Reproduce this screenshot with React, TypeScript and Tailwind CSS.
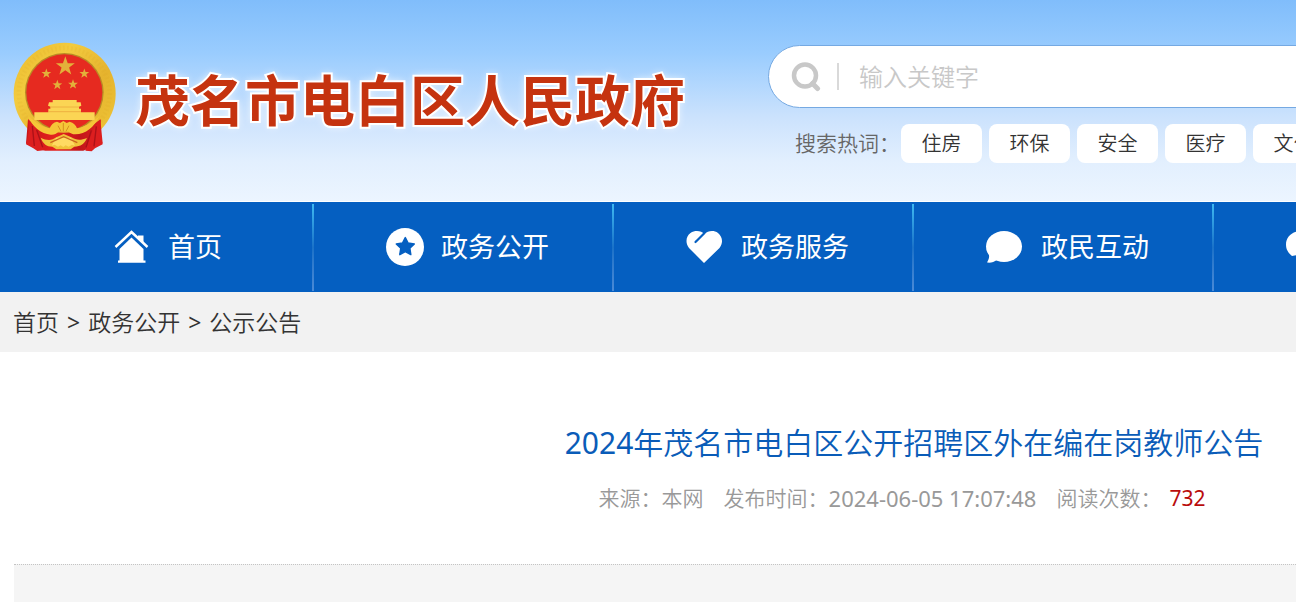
import React from "react";

const hotWords = ["住房", "环保", "安全", "医疗", "文化"];

const STAR = "M0,-10 2.4,-3.2 9.5,-3.1 3.8,1.2 5.9,8.1 0,4 -5.9,8.1 -3.8,1.2 -9.5,-3.1 -2.4,-3.2Z";

const Emblem = () => (
  <svg viewBox="39 36 312 330" className="h-[110px] w-[104px] shrink-0" aria-hidden="true">
    <defs>
      <linearGradient id="gold" x1="0" y1="0" x2="1" y2="1">
        <stop offset="0" stopColor="#e9b92c" />
        <stop offset="0.3" stopColor="#f3cb3f" />
        <stop offset="0.6" stopColor="#e5b32e" />
        <stop offset="1" stopColor="#f0c838" />
      </linearGradient>
      <linearGradient id="drape" x1="0" y1="0" x2="1" y2="0">
        <stop offset="0" stopColor="#c91418" />
        <stop offset="0.4" stopColor="#e5231f" />
        <stop offset="0.7" stopColor="#c3161a" />
        <stop offset="1" stopColor="#dd201f" />
      </linearGradient>
    </defs>
    <circle cx="194" cy="191" r="153" fill="url(#gold)" />
    <circle cx="193" cy="190" r="136" fill="none" stroke="#d99d22" strokeWidth="14" strokeDasharray="5 7" opacity="0.12" />
    <circle cx="193" cy="187" r="118" fill="#b98a24" />
    <circle cx="193" cy="187" r="114" fill="#e62a20" />
    <g fill="#e3b03a">
      <path d={STAR} transform="translate(196 109) scale(3)" />
      <path d={STAR} transform="translate(139 131) scale(1.55)" />
      <path d={STAR} transform="translate(253 131) scale(1.55)" />
      <path d={STAR} transform="translate(172 165) scale(1.55)" />
      <path d={STAR} transform="translate(219 163) scale(1.55)" />
    </g>
    <path d="M158 210h72v7h12l2 10-7 3v6h6v11h41v23H103v-23h42v-11h6v-6l-7-3 3-10h11z" fill="#fbd554" />
    <path d="M151 231h86M145 245h98" stroke="#e9a036" strokeWidth="2" />
    <path d="M84 268c34 30 57 40 107 40s76-11 110-40l7 72c-20 8-40 14-58 22h-115c-22-6-40-10-57-22z" fill="url(#drape)" />
    <path d="M84 268l22 23 26 70-20 2-12-8-22-12c7-22 10-48 6-75zM303 268l-23 28-24 66 19 2 10-9 23-12c-7-25-9-50-5-75z" fill="#dc1e1f" />
    <path d="M97 288l6 60M289 289l-7 60M110 300l18 52M274 301l-16 51" stroke="#ab1118" strokeWidth="4" />
    <path
      d="M84 258c24 20 42 32 65 37 4-10 11-18 22-20l9 4 10-6 10 6 9-4c12 3 18 10 22 20 24-4 45-17 67-37-15 33-41 55-72 55-9 0-16-4-20-8h-31c-6 7-13 10-23 9-28-2-57-25-68-56z"
      fill="#f5c638"
    />
    <path d="M174 287l9 17M190 279v25M207 287l-9 17" stroke="#d88f20" strokeWidth="3" />
    <path
      d="M122 323c18 9 34 9 47-1l22-10 23 10c14 9 28 10 47 2-7 17-19 26-38 26l-11 8h-43l-12-8c-17 0-29-10-35-27z"
      fill="#f1c33b"
    />
    <path d="M168 323l45 0 12 24-9-3-10 6-9-4-7 5-8-5-8 4-10-6-9 3z" fill="#ffda62" />
    <path d="M151 338l40-18 41 18" fill="none" stroke="#cb651f" strokeWidth="4" />
  </svg>
);

const HomeIcon = () => (
  <svg viewBox="1 0 38 38" className="h-[38px] w-[38px]" aria-hidden="true">
    <path d="M19.500 9.500 31.500 21v12.800h-24V21z" fill="#fff" />
    <path d="M3.500 19 19.500 4l16 15" fill="none" stroke="#fff" strokeWidth="2.4" />
    <path d="M26 7.500h5.500v7.200L26 9.800zM6 32.500h27.500v2.300H6z" fill="#fff" />
  </svg>
);

const StarIcon = () => (
  <svg viewBox="0 0 38 38" className="h-[38px] w-[38px]" aria-hidden="true">
    <circle cx="19" cy="19" r="19" fill="#fff" />
    <path
      d="M0,-9 2.800,-3.600 9,-2.700 4.500,1.600 5.500,8 0,5 -5.500,8 -4.500,1.600 -9,-2.700 -2.800,-3.600Z"
      transform="translate(19.3 18.6)"
      fill="#055fc1"
      stroke="#055fc1"
      strokeWidth="1.5"
      strokeLinejoin="round"
    />
  </svg>
);

const HeartIcon = () => (
  <svg viewBox="0 0 38 38" className="h-[38px] w-[38px]" aria-hidden="true">
    <path
      d="M18 35 3 20C-1 15 0 8 4.500 5 9 2 15 2.500 18.500 6 22 2.500 28 2 32 5c4.500 3.500 5.500 10 1.500 15z"
      fill="#fff"
    />
    <path d="M18.300 5.200 9.500 14" stroke="#055fc1" strokeWidth="2.200" strokeLinecap="round" />
  </svg>
);

const ChatIcon = () => (
  <svg viewBox="1 0 38 38" className="h-[38px] w-[38px]" aria-hidden="true">
    <ellipse cx="19" cy="18.500" rx="18" ry="15.500" fill="#fff" />
    <path d="M3.500 25c1.500 4 0 7-1.500 9.500 4 .5 7-.5 10-2.500z" fill="#fff" />
  </svg>
);

const WechatIcon = () => (
  <svg viewBox="0 0 38 38" className="h-[38px] w-[38px]" aria-hidden="true">
    <path d="M15 3C6 3 0 9 0 16.500c0 5 2 8 6 11.500l5-1c-1-9 6-15 17-15C26 6 21 3 15 3z" fill="#fff" />
    <path d="M26 14c-7 0-12 4-12 9.500S19 33 26 33l7 3-1.500-5c4-2 6.500-4 6.500-8 0-5-5-9-12-9z" fill="#fff" />
  </svg>
);

const navItems = [
  { title: "首页", icon: <HomeIcon /> },
  { title: "政务公开", icon: <StarIcon /> },
  { title: "政务服务", icon: <HeartIcon /> },
  { title: "政民互动", icon: <ChatIcon /> },
  { title: "走进电白", icon: <WechatIcon /> },
];

const Header = () => (
  <header className="border-b border-white bg-[linear-gradient(to_bottom,#80bdfb_0%,#99ccfe_26%,#cbe2fd_58%,#e2effe_80%,#ecf5ff_100%)]">
    <div className="flex h-[201px] w-[1800px] items-start pl-[13px]">
      <a href="#" className="flex w-[755px] shrink-0 items-center gap-[18px] pt-[42px]">
        <Emblem />
        <h1 className="whitespace-nowrap font-['Noto_Sans_CJK_SC',sans-serif] text-[55px] leading-[80px] font-bold text-[#c5330f] [-webkit-text-stroke:4px_#fff] [paint-order:stroke_fill] [text-shadow:0_0_8px_#fff]">
          茂名市电白区人民政府
        </h1>
      </a>
      <div className="grow pt-[45px]">
        <form className="flex h-[63px] items-center rounded-full border border-[#75a9e2] bg-white pl-[22px]">
          <button type="button" aria-label="搜索" className="text-[#c8c8c8]">
            <svg viewBox="0 0 30 30" className="h-[30px] w-[30px]" fill="none" stroke="currentColor" aria-hidden="true">
              <circle cx="14" cy="13.500" r="11" strokeWidth="4.500" />
              <path d="M21.500 21.500 26.500 26.500" strokeWidth="5" strokeLinecap="round" />
            </svg>
          </button>
          <span className="ml-4 h-[27px] w-[2px] bg-[#d9d9d9]" />
          <input
            type="text"
            aria-label="输入关键字"
            placeholder="输入关键字"
            className="ml-5 h-10 grow text-2xl font-[350] text-[#333] outline-none placeholder:text-[#c8c8c8]"
          />
        </form>
        <div className="mt-4 flex h-[39px] items-center pl-[27px]">
          <span className="w-[106px] text-[21px] font-[350] text-[#666]">搜索热词：</span>
          <div className="flex gap-[7px]">
            {hotWords.map((word) => (
              <a
                key={word}
                href="#"
                className="flex h-[39px] w-[81px] items-center justify-center rounded-lg bg-white text-xl font-[350] text-[#333]"
              >
                {word}
              </a>
            ))}
          </div>
        </div>
      </div>
    </div>
  </header>
);

const NavBar = () => (
  <nav className="bg-[#055fc1]">
    <div className="ml-[14px] flex w-[1800px]">
      {navItems.map(({ title, icon }) => (
        <a key={title} href="#" className="flex h-[90px] w-[300px] items-center text-white">
          <span className="flex grow items-center justify-center gap-[17px] pl-[9px]">
            {icon}
            <span className="text-[27px] leading-10">{title}</span>
          </span>
          <span className="h-[87px] w-[2px] bg-linear-to-b from-[#40b9f0] via-[#1b72c8] to-[#4a8ad6]" />
        </a>
      ))}
    </div>
  </nav>
);

const Breadcrumb = () => (
  <div className="flex h-[60px] items-center gap-2 bg-[#f2f2f2] pl-[13px] text-[23px] font-[350] text-[#333]">
    <a href="#">首页</a>
    <span className="font-normal">&gt;</span>
    <a href="#">政务公开</a>
    <span className="font-normal">&gt;</span>
    <a href="#">公示公告</a>
  </div>
);

const Article = () => (
  <main className="ml-[14px] w-[1800px] pt-[61px]">
    <h2 className="text-center text-[30px] leading-[60px] font-[350] text-[#0a5cb8]">
      <span className="font-normal">2024</span>年茂名市电白区公开招聘区外在编在岗教师公告
    </h2>
    <div className="mt-[10px] flex justify-center gap-5 pr-6 text-[21px] leading-[30px] font-[350] text-[#999]">
      <span>来源：本网</span>
      <span className="flex">
        发布时间：<time className="text-[22px] font-normal">2024-06-05 17:07:48</time>
      </span>
      <span className="flex gap-2">
        阅读次数：<span className="font-normal text-[#b90c0c]">732</span>
      </span>
    </div>
    <div className="mt-[51px] h-24 border-t border-dotted border-[#c4c4c4] bg-[#f5f5f5]" />
  </main>
);

const App = () => {
  return (
    <div className="h-screen overflow-hidden bg-white font-['Noto_Sans','Noto_Sans_CJK_SC',sans-serif]">
      <Header />
      <NavBar />
      <Breadcrumb />
      <Article />
    </div>
  );
};

export default App;
